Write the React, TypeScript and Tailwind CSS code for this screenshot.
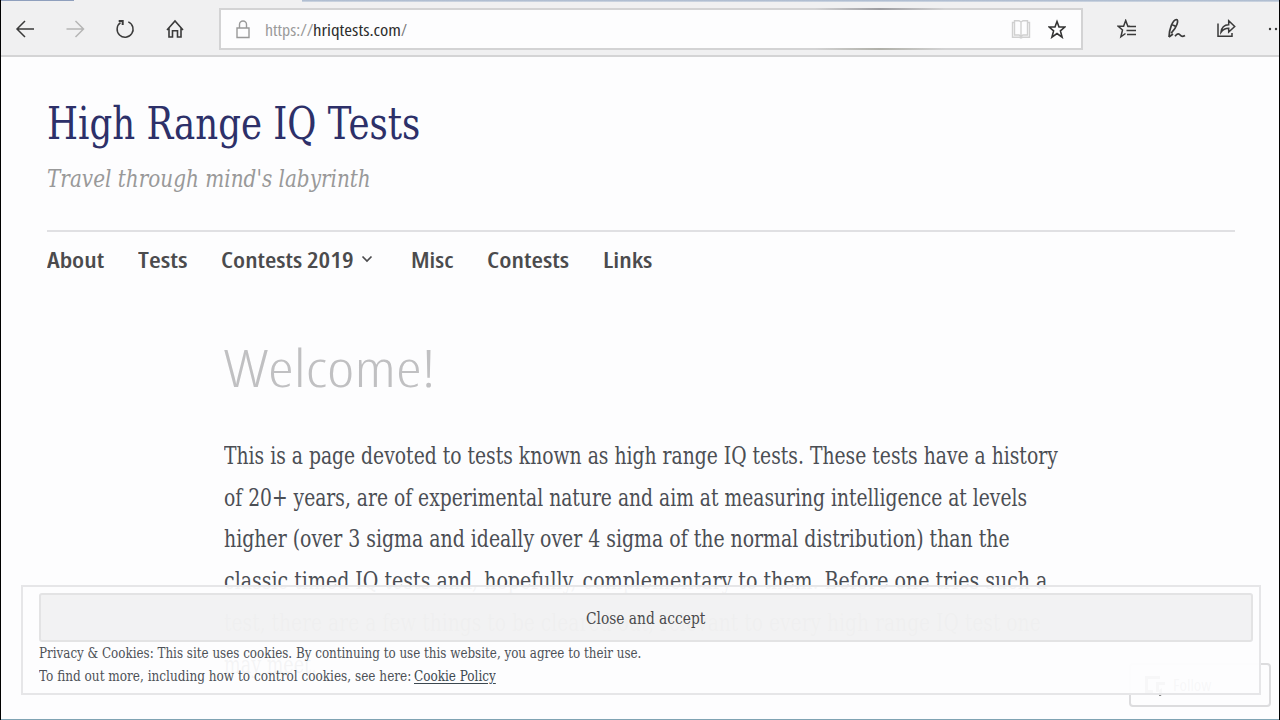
import { useLayoutEffect, useRef, useState, type ReactNode } from "react";

/** A single line of text condensed or expanded to fill its container's width. */
function FitLine({ className, children }: { className: string; children: ReactNode }) {
  const outer = useRef<HTMLSpanElement>(null);
  const inner = useRef<HTMLSpanElement>(null);
  const [scale, setScale] = useState(1);
  useLayoutEffect(() => {
    if (outer.current && inner.current) {
      setScale(outer.current.clientWidth / inner.current.offsetWidth);
    }
  }, []);
  return (
    <span ref={outer} className={`block shrink-0 whitespace-nowrap ${className}`}>
      <span ref={inner} className="inline-block origin-left" style={{ transform: `scaleX(${scale})` }}>
        {children}
      </span>
    </span>
  );
}

const icon = "block shrink-0 fill-none stroke-current";

function Toolbar() {
  return (
    <header className="flex h-[57px] shrink-0 flex-col border-b-2 border-[#d4d4d5] bg-[#f0f0f1]">
      <div className="flex h-[2px] shrink-0 justify-between">
        <div className="h-px w-[73px] bg-[#8f9fbd]" />
        <div className="h-[2px] w-[977px] bg-gradient-to-b from-[#a5b5cb] to-[#d3dae4]" />
      </div>
      <div className="flex h-[53px] items-start overflow-hidden pt-[6px]">
        <div className="flex h-[41px] w-[218px] shrink-0 items-center gap-[30px] pl-[14px] text-[#3a3a3a]">
          <svg className={icon} width="20" height="20" viewBox="0 0 20 20" strokeWidth="1.5">
            <path d="M19 10H2M10 2L2 10l8 8" />
          </svg>
          <svg className={`${icon} text-[#b5b5b5]`} width="20" height="20" viewBox="0 0 20 20" strokeWidth="1.5">
            <path d="M1.5 10H18.500M10.500 2l8 8-8 8" />
          </svg>
          <svg className={icon} width="20" height="20" viewBox="0 0 20 20" strokeWidth="1.5">
            <path d="M13.300 2.900A8 8 0 1 1 5.500 3.700" />
            <path d="M3.700 2h4v4" strokeWidth="2" />
          </svg>
          <svg className={icon} width="20" height="20" viewBox="0 0 20 20" strokeWidth="1.6">
            <path d="M2 11L10 2l8 9M4 9.300V18h3.500v-6.200h5V18H16V9.300" />
          </svg>
        </div>
        <div className="flex h-[42px] w-[864px] shrink-0 flex-col justify-between border-2 border-[#d3d3d4] bg-[#fdfdfe]">
          <div className="-mt-[2px] ml-[594px] h-[2px] w-[130px] bg-gradient-to-r from-transparent via-[#9c9ca0] to-transparent" />
          <div className="flex h-[38px] items-center text-[#333]">
            <svg className={`${icon} ml-[15px] text-[#999]`} width="14" height="19" viewBox="0 0 14 19" strokeWidth="1.4">
              <path d="M1 8h12v9.500H1zM3.500 8V4.500a3.500 3.500 0 0 1 7 0V8" />
            </svg>
            <div className="mt-[2px] ml-[15px] flex font-['Open_Sans',sans-serif] text-[16px] leading-[24px]">
              <FitLine className="w-[48px] text-[#9a9a9a]">https://</FitLine>
              <FitLine className="w-[88px] text-[#2d2d2d]">hriqtests.com</FitLine>
              <FitLine className="w-[6px] text-[#777]">/</FitLine>
            </div>
            <svg className={`${icon} ml-[604px] text-[#d0d0d0]`} width="20" height="20" viewBox="0 0 20 20" strokeWidth="1.4">
              <path d="M10 3v14M3.500 1.700H8L10 3l2-1.300h4.500V16H12l-2 1.300L8 16H3.500zM3.500 3.500H1.500V18.300H8.500L10 19l1.500-.7h7V3.500h-2" />
            </svg>
            <svg className={`${icon} ml-[17px]`} width="18" height="20" viewBox="0 0 18 20" strokeWidth="1.6">
              <path d="M9 2.500l2 5.500h5.900l-4.500 3.900 1.700 6.300L9 14.600l-5.100 3.600 1.700-6.300L1.100 8H7z" />
            </svg>
          </div>
          <div className="-mb-[2px] ml-[594px] h-[2px] w-[130px] bg-gradient-to-r from-transparent via-[#b0b0a9] to-transparent" />
        </div>
        <div className="flex h-[41px] w-[200px] shrink-0 items-center pl-[34px] text-[#3a3a3a]">
          <svg className={icon} width="20" height="20" viewBox="0 0 20 20" strokeWidth="1.5">
            <path d="M13 7.300h-2.200L8.700 1.500 6.600 7.300H1.300l4.200 3.700L3.900 17.800l4.600-3.300M10.500 7.500H19M9.500 11.500H19M10 15.500h9" />
          </svg>
          <svg className={`${icon} ml-[30px]`} width="20" height="21" viewBox="0 0 20 21" strokeWidth="1.700">
            <path d="M2 19C2.300 11 5.500 2 9.500 1.500c2.600.2.500 8-5.300 13.700M5 6.500l4.300 2.200M2 19l4-3M8 18.300c2.500-3.200 4-2.800 5.400-1 1 1.400 2.600 1.400 4.600.2" />
          </svg>
          <svg className={`${icon} ml-[29px]`} width="20" height="20" viewBox="0 0 20 20" strokeWidth="1.500">
            <path d="M2 4.500v12.700h14v-3.200M5 13.300c.5-4.800 3-7.500 7.700-7.600V1.800l6 5.700-6 5.500V9.300c-3.200 0-5.600 1-7.700 4z" />
          </svg>
          <svg className="ml-[32px] block shrink-0 fill-current" width="16" height="4" viewBox="0 0 16 4">
            <circle cx="2" cy="2" r="1.200" /><circle cx="8" cy="2" r="1.200" /><circle cx="14" cy="2" r="1.200" />
          </svg>
        </div>
      </div>
    </header>
  );
}

function Nav() {
  return (
    <nav className="mt-[12px] flex h-[30px] gap-[34px] font-['Open_Sans',sans-serif] text-[21.500px] leading-[31px] font-[560] text-[#4b4b4d]">
      <FitLine className="w-[57px]">About</FitLine>
      <FitLine className="w-[49px]">Tests</FitLine>
      <div className="flex w-[156px] items-center gap-[8px]">
        <FitLine className="w-[132px]">Contests 2019</FitLine>
        <svg className={icon} width="12" height="8" viewBox="0 0 12 8" strokeWidth="1.700">
          <path d="M1.500 1.500L6 6l4.500-4.500" />
        </svg>
      </div>
      <FitLine className="w-[42px]">Misc</FitLine>
      <FitLine className="w-[82px]">Contests</FitLine>
      <FitLine className="w-[49px]">Links</FitLine>
    </nav>
  );
}

function CookieBanner() {
  return (
    <section className="absolute top-[585px] left-[20px] flex h-[110px] w-[1240px] flex-col border-2 border-[#e6e6e8] bg-[#fdfdfe]/95 pt-[6px] pl-[16px] text-[#4d5157]">
      <button className="flex h-[49px] w-[1214px] items-center rounded-[3px] border-2 border-[#e3e3e4] bg-[#ededed]/65 pl-[545px] text-[17.5px] leading-[24px] text-[#4a4a4c]">
        <FitLine className="w-[119px] text-left">Close and accept</FitLine>
      </button>
      <div className="text-[15.500px] leading-[23px]">
        <FitLine className="w-[602px]">
          Privacy &amp; Cookies: This site uses cookies. By continuing to use this website, you agree to their use.
        </FitLine>
        <div className="flex gap-[3px]">
          <FitLine className="w-[372px]">To find out more, including how to control cookies, see here:</FitLine>
          <FitLine className="w-[82px] text-[#3c4850]">
            <a className="underline underline-offset-2">Cookie Policy</a>
          </FitLine>
        </div>
      </div>
    </section>
  );
}

export default function App() {
  return (
    <div className="relative flex h-[720px] w-[1280px] flex-col overflow-hidden border-x border-black bg-[#fdfdfe] font-['DejaVu_Serif_Condensed','DejaVu_Serif',serif] [font-stretch:condensed]">
      <Toolbar />
      <main className="flex min-h-0 flex-1 flex-col overflow-hidden pl-[46px]">
        <h1 className="mt-[41px] text-[44px] leading-[52px] text-[#2d3069]">
          <FitLine className="w-[373px]">High Range IQ Tests</FitLine>
        </h1>
        <p className="mt-[13px] text-[25px] leading-[32px] text-[#999] italic">
          <FitLine className="w-[324px]">Travel through mind's labyrinth</FitLine>
        </p>
        <div className="mt-[35px] h-[2px] w-[1188px] shrink-0 bg-[#e0e0e3]" />
        <Nav />
        <article className="pl-[177px]">
          <h2 className="mt-[63px] font-['Open_Sans',sans-serif] text-[52px] leading-[60px] font-light text-[#c0c0c2]">
            <FitLine className="w-[211px]">Welcome!</FitLine>
          </h2>
          <div className="mt-[38px] text-[25px] leading-[41.700px] text-[#4b4e54]">
            <FitLine className="w-[834px]">This is a page devoted to tests known as high range IQ tests. These tests have a history</FitLine>
            <FitLine className="w-[803px]">of 20+ years, are of experimental nature and aim at measuring intelligence at levels</FitLine>
            <FitLine className="w-[786px]">higher (over 3 sigma and ideally over 4 sigma of the normal distribution) than the</FitLine>
            <FitLine className="w-[823px]">classic timed IQ tests and, hopefully, complementary to them. Before one tries such a</FitLine>
            <FitLine className="w-[817px]">test, there are a few things to be cleared out, relevant to every high range IQ test one</FitLine>
            <FitLine className="w-[93px]">may meet.</FitLine>
          </div>
        </article>
      </main>
      <div className="absolute top-[663px] left-[1128px] flex h-[44px] w-[142px] items-center rounded-[4px] border-2 border-[#dcdcde] bg-[#fdfdfe] pl-[12px] text-[#888]">
        <svg className="block fill-current" width="24" height="22" viewBox="0 0 24 22">
          <path d="M2 2h15v3H5v11h5v3H2zM13 8h9v3h-6v5l3-2v5l-1 3h-2v-4h-3z" />
        </svg>
        <span className="ml-[6px] font-['Open_Sans',sans-serif] text-[17px]">Follow</span>
      </div>
      <CookieBanner />
      <div className="h-px shrink-0 bg-[#7fa3b3]" />
    </div>
  );
}
